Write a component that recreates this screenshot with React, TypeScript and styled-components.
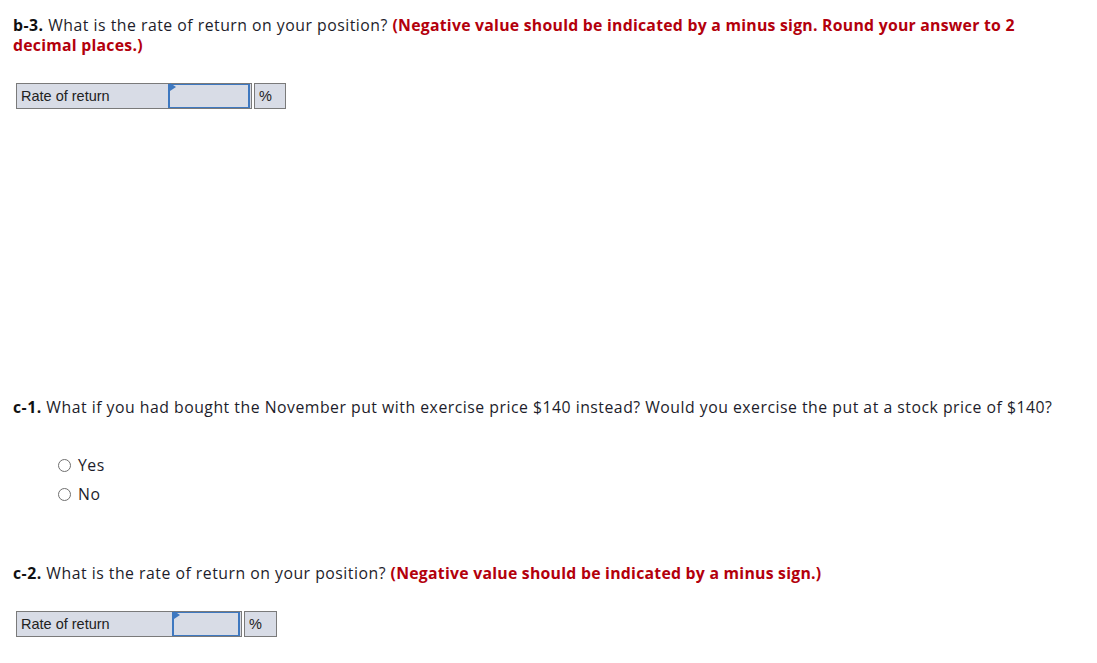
import React, { FC } from 'react';
import styled, { createGlobalStyle } from 'styled-components';

const TEXT = '#1d1d2b';
const RED = '#b3000c';
const CELL_BG = '#d8dce6';
const CELL_BORDER = '#7a7a7a';
const INPUT_BLUE = '#3e78c0';

const GlobalStyle = createGlobalStyle`
  html, body {
    margin: 0;
    padding: 0;
    background: #ffffff;
  }
  body {
    font-family: "Open Sans", Lato, sans-serif;
    color: ${TEXT};
  }
`;

const Page = styled.div`
  padding: 15px 13px 0 13px;
`;

const Question = styled.p<{ $top?: number }>`
  margin: ${(p) => p.$top ?? 0}px 0 0 0;
  font-size: 15.8px;
  letter-spacing: 0.5px;
  line-height: 20px;
  max-width: 1060px;
  b {
    font-weight: 700;
    color: #111;
  }
`;

const Hint = styled.strong`
  color: ${RED};
  font-weight: 700;
  letter-spacing: 0.25px;
`;

const AnswerTable = styled.table<{ $top: number }>`
  margin: ${(p) => p.$top}px 0 0 3px;
  border-collapse: separate;
  border-spacing: 0;
  font-family: "Liberation Sans", Arial, sans-serif;
  font-size: 14.5px;
  color: #222;
`;

const LabelCell = styled.td<{ $w: number }>`
  width: ${(p) => p.$w}px;
  height: 26px;
  padding: 0 0 0 4px;
  box-sizing: border-box;
  background: ${CELL_BG};
  border: 1px solid ${CELL_BORDER};
  border-right: none;
`;

const InputCell = styled.td<{ $w: number }>`
  width: ${(p) => p.$w}px;
  height: 26px;
  padding: 0;
  box-sizing: border-box;
  background: ${CELL_BG};
  border: 1px solid ${CELL_BORDER};
  border-left: none;
`;

const AnswerInput = styled.div`
  position: relative;
  height: 24px;
  margin: 0 1px 0 0;
  border: 2px solid ${INPUT_BLUE};
  border-top-width: 1px;
  border-bottom-width: 1px;
  box-sizing: border-box;
  background: ${CELL_BG};
  &::before {
    content: '';
    position: absolute;
    left: 0;
    top: 0;
    border-top: 4px solid transparent;
    border-bottom: 4px solid transparent;
    border-left: 6px solid ${INPUT_BLUE};
    transform: translateY(-2px);
  }
`;

const Gap = styled.td`
  width: 2px;
  padding: 0;
  background: #fff;
`;

const UnitCell = styled.td<{ $w: number }>`
  width: ${(p) => p.$w}px;
  height: 26px;
  padding: 0 0 0 4px;
  box-sizing: border-box;
  background: ${CELL_BG};
  border: 1px solid ${CELL_BORDER};
`;

const Options = styled.div`
  margin: 38px 0 0 45px;
  display: flex;
  flex-direction: column;
  gap: 9px;
`;

const Option = styled.label`
  display: flex;
  align-items: center;
  gap: 7px;
  font-size: 15.8px;
  letter-spacing: 0.5px;
  line-height: 20px;
  color: ${TEXT};
`;

const RadioDot = styled.span`
  width: 13px;
  height: 13px;
  border-radius: 50%;
  border: 1px solid #6f6f6f;
  box-sizing: border-box;
  background: #fff;
`;

type RowProps = { top: number; label: number; input: number; unit: number };

const RateRow: FC<RowProps> = ({ top, label, input, unit }) => (
  <AnswerTable $top={top}>
    <tbody>
      <tr>
        <LabelCell $w={label}>Rate of return</LabelCell>
        <InputCell $w={input}>
          <AnswerInput />
        </InputCell>
        <Gap />
        <UnitCell $w={unit}>%</UnitCell>
      </tr>
    </tbody>
  </AnswerTable>
);

const App: FC = () => (
  <Page>
    <GlobalStyle />
    <Question>
      <b>b-3.</b> What is the rate of return on your position?{' '}
      <Hint>(Negative value should be indicated by a minus sign. Round your answer to 2 decimal places.)</Hint>
    </Question>
    <RateRow top={28} label={152} input={84} unit={32} />

    <Question $top={288}>
      <b>c-1.</b> What if you had bought the November put with exercise price $140 instead? Would you
      exercise the put at a stock price of $140?
    </Question>
    <Options>
      <Option>
        <RadioDot /> Yes
      </Option>
      <Option>
        <RadioDot /> No
      </Option>
    </Options>

    <Question $top={59}>
      <b>c-2.</b> What is the rate of return on your position?{' '}
      <Hint>(Negative value should be indicated by a minus sign.)</Hint>
    </Question>
    <RateRow top={28} label={156} input={70} unit={33} />
  </Page>
);

export default App;
